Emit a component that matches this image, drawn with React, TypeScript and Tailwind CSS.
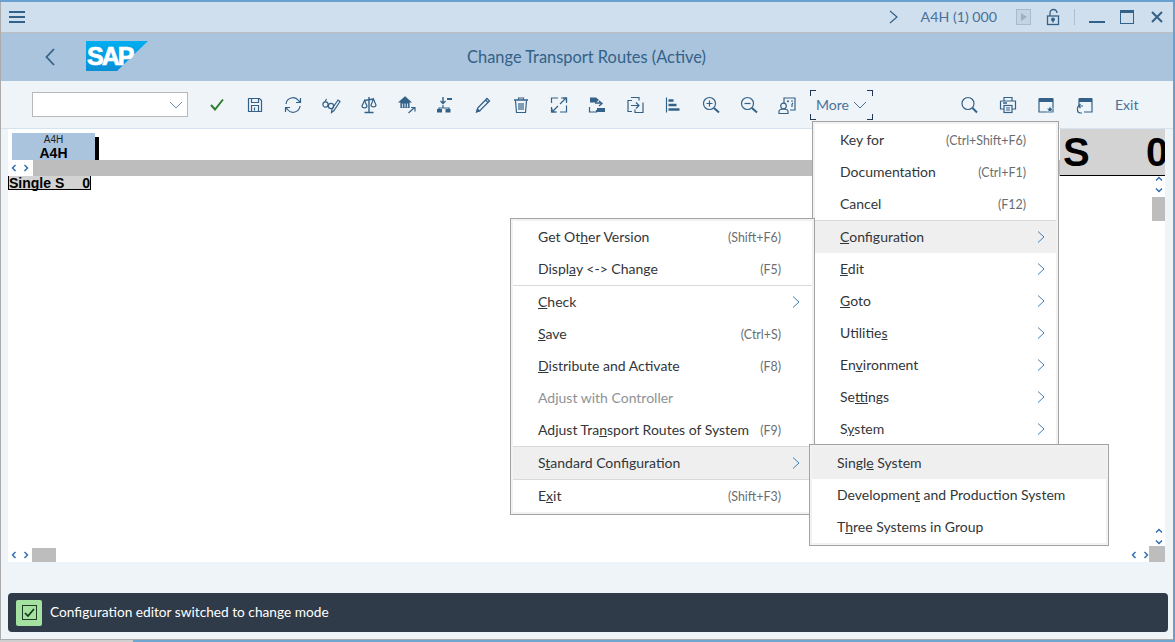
import React from "react";

const C = "#346187";
const S = ({ children, w = 20, h = 20 }: { children: React.ReactNode; w?: number; h?: number }) => (
  <svg width={w} height={h} viewBox={`0 0 ${w} ${h}`} fill="none" stroke={C} strokeWidth="1.2" className="block shrink-0">
    {children}
  </svg>
);

const icons: React.ReactNode[] = [
  <svg width="20" height="20" viewBox="0 0 20 20" fill="none" className="block"><path d="M4 10l4 4.5L16 4.5" stroke="#2b7d2b" strokeWidth="2" /></svg>,
  <S><path d="M3.500 3.500h11l2 2v11h-13z" /><path d="M6.500 3.500v4h7v-4M6.500 16.500v-6h7v6M9.500 12.500v3" /></S>,
  <S><path d="M3 9a7 7 0 0 1 12.500-3.500L17 7M17 11a7 7 0 0 1-12.500 3.500L3 13" /><path d="M17.500 3v4.500h-4.500M2.500 17v-4.500H7" /></S>,
  <S><circle cx="4.500" cy="9.500" r="2.600" /><circle cx="10" cy="11" r="2.600" /><path d="M4 7l1.500-3M7 10l.5.300" /><path d="M10.500 17.500l.5-3.500 6-9 2 1.500-6 9z" strokeWidth="1.200" /></S>,
  <S><path d="M10 2v15M5.500 17.500h9M5.500 5.500l9-1.500" strokeWidth="1.400" /><path d="M5.500 5.500l-2.500 5.500c0 2.500 5 2.500 5 0zM14.500 4l-2.500 6c0 2.500 5 2.500 5 0z" /></S>,
  <S><path d="M8 2l5.500 5h-1.500v5.500H4V7H2.500z" fill={C} /><path d="M5.500 8.500v4M8 8.500v4M10.500 8.500v4" stroke="#c8d9e8" /><path d="M11.500 18l6-5.500M14 12.500h4v4" /></S>,
  <S><path d="M8 2v6M5.500 6L8 8.500 10.500 6" strokeWidth="1.400" /><path d="M12 4h5" strokeWidth="2" /><path d="M8 10v3M4 16v-3h10v3" /><rect x="2" y="14" width="5" height="3.500" fill={C} stroke="none" /><rect x="10.500" y="14" width="5" height="3.500" fill={C} stroke="none" /></S>,
  <S><path d="M4 16.500l.7-3.500L14 3.500l2.500 2.500L7 15.500z" strokeWidth="1.300" /><path d="M12.500 5l2.500 2.500" /><path d="M3.500 17l1-3 2 2z" fill={C} /></S>,
  <S><path d="M3 5h14" strokeWidth="1.500" /><path d="M7.500 4.500V3h5v1.500" /><path d="M4.500 5.500l1 12h9l1-12" /><path d="M8 8v7M10 8v7M12 8v7" /></S>,
  <S><path d="M2.500 8V3H9M11 17h6.500v-6.500M17.500 8V3H12M2.500 12v5H8" /><path d="M11 9l6-6M14 3h3.500v3.500M9 11l-6 6M3 13.500V17h3.500" /></S>,
  <S><path d="M3 2.500h6l3 2.500-3 2.500H3z" fill={C} stroke="none" /><path d="M8 8h6M12 6l3 2.500-3 2.500" strokeWidth="1.400" /><path d="M2.500 12v5h7v-2" /><rect x="10" y="13" width="8" height="4" fill={C} stroke="none" /></S>,
  <S><path d="M7 5.500h-4v11h4M6 2.500h8v3M18 7.500v10H10v-3" /><path d="M6 10.500h8M11 7.500l3 3-3 3" /></S>,
  <S><path d="M3.500 2.500v15" /><path d="M5.500 5.500h5M5.500 10h8M5.500 14.500h11" strokeWidth="2.400" /></S>,
  <S><circle cx="8.500" cy="8.500" r="6" /><path d="M8.500 5.500v6M5.500 8.500h6" /><path d="M13 13l5 4.500" strokeWidth="2" /></S>,
  <S><circle cx="8.500" cy="8.500" r="6" /><path d="M5.500 8.500h6" /><path d="M13 13l5 4.500" strokeWidth="2" /></S>,
  <S><path d="M7 8V3h11v12h-5" /><path d="M10 6h2M14 6h2M15 9v3M10 6l1.500 1M16 9l-1-1" /><circle cx="6.500" cy="11" r="2.800" /><path d="M2 18.500v-2c0-2 2-2.500 4.500-2.500S11 14.500 11 16.500v2z" /></S>,
];

const rightIcons: React.ReactNode[] = [
  <S><circle cx="8" cy="8.500" r="6" /><path d="M12.500 13l4.500 4.500" strokeWidth="2" /></S>,
  <S><path d="M6 6V2.500h8V6" /><path d="M2.500 6h15v8H14M6 14H2.500V6" /><path d="M5 8h4" strokeWidth="1.500" /><rect x="6" y="10.500" width="8" height="7" /><path d="M8 13h4M8 15h4" /></S>,
  <S><path d="M3 4h14v13H3z" /><rect x="3" y="3" width="14" height="4" fill={C} stroke="none" /><path d="M14 11l1 2.300 2.500.2-1.900 1.600.6 2.400-2.200-1.300-2.200 1.300.6-2.400-1.900-1.600 2.500-.2z" fill={C} stroke="#eff4f9" strokeWidth="0.500" /></S>,
  <S><path d="M5 12V4h13v13H10" /><rect x="5" y="3" width="13" height="4" fill={C} stroke="none" /><path d="M9 11H5.500a2 2 0 0 0-2 2v2a3 3 0 0 0 3 3H8" /><path d="M6.500 9l-2 2 2 2" /></S>,
];

const Mini = ({ d, cls = "" }: { d: string; cls?: string }) => (
  <svg width="8" height="8" viewBox="0 0 8 8" fill="none" stroke="#2a6aa8" strokeWidth="1.400" className={"block shrink-0 " + cls}>
    <path d={d} />
  </svg>
);
const L = "M5.500 1L2.500 4l3 3";
const R = "M2.500 1l3 3-3 3";
const U = "M1 5.500L4 2.500l3 3";
const D = "M1 2.500L4 5.500l3-3";

const Chevron = () => (
  <svg width="8" height="14" viewBox="0 0 8 14" fill="none" stroke="#3f7fb8" strokeWidth="1" className="block shrink-0">
    <path d="M1 1.500L7 7l-6 5.500" />
  </svg>
);

type RowP = { label: React.ReactNode; sc?: string; arrow?: boolean; hover?: boolean; off?: boolean; pl: string; scr?: string; arr?: string };
const Row = ({ label, sc, arrow, hover, off, pl, scr, arr }: RowP) => (
  <div className={`h-8 flex items-center ${pl} ${hover ? "bg-[#efefef]" : "bg-white"}`}>
    <span className={`text-[14px] mb-[2px] whitespace-nowrap ${off ? "text-[#8e9296]" : "text-[#32363a]"}`}>{label}</span>
    <span className="flex-1" />
    {sc && <span className={`text-[12.400px] mt-[2px] text-[#6a6d70] whitespace-nowrap ${scr}`}>{sc}</span>}
    {arrow && <span className={arr}><Chevron /></span>}
  </div>
);
const Sep = () => <div className="h-px bg-[#d9d9d9]" />;

const menuCls = "absolute border border-[#a3a3a3] bg-[#f2f2f2] p-[2px]";

export default function App() {
  return (
    <div
      className="relative w-[1175px] h-[642px] overflow-hidden flex flex-col bg-[#eff4f9]"
      style={{ fontFamily: "Lato, Roboto, sans-serif" }}
    >
      <div className="h-[2px] bg-[#6aa0d0] shrink-0" />
      <div className="flex-1 flex flex-col border-l border-[#ababab] border-r-2 border-r-[#6aa0d0] min-h-0">
        {/* title bar */}
        <div className="h-[31px] shrink-0 bg-[#d0dfed] border-b border-[#bdbdbd] flex items-center">
          <div className="ml-2 flex flex-col gap-[3px] w-4">
            <div className="h-[2px] bg-[#346187]" /><div className="h-[2px] bg-[#346187]" /><div className="h-[2px] bg-[#346187]" />
          </div>
          <div className="flex-1" />
          <svg width="9" height="14" viewBox="0 0 9 14" fill="none" stroke={C} strokeWidth="1.200"><path d="M1 1l7 6-7 6" /></svg>
          <span className="ml-[23px] text-[14.200px] text-[#4a7199]">A4H (1) 000</span>
          <div className="ml-[19px] w-[15px] h-[16px] border border-[#a9bccd] bg-[#c4d4e3] flex items-center justify-center">
            <svg width="8" height="8" viewBox="0 0 8 8"><path d="M1 0l6 4-6 4z" fill="#9db1c4" /></svg>
          </div>
          <svg className="ml-[15px]" width="15" height="18" viewBox="0 0 15 18" fill="none" stroke={C} strokeWidth="1.300">
            <path d="M4 8V5a3.500 3.500 0 0 1 7 0" /><rect x="1.500" y="8" width="11" height="8.500" /><circle cx="7" cy="11.500" r="1.300" fill={C} /><path d="M7 12v2.500" />
          </svg>
          <div className="ml-[13px] w-px h-4 bg-[#aebfcf]" />
          <div className="ml-[14px] w-4 h-[2px] bg-[#346187] mt-[10px]" />
          <div className="ml-[15px] w-[14px] h-[14px] border border-[#346187] border-t-[3px]" />
          <svg className="ml-[17px] mr-[10px]" width="12" height="12" viewBox="0 0 12 12" stroke={C} strokeWidth="2"><path d="M1 1l10 10M11 1L1 11" /></svg>
        </div>
        {/* header */}
        <div className="h-12 shrink-0 bg-[#a9c4dc] relative flex items-center justify-center">
          <div className="absolute left-[44px] top-[15px]">
            <svg width="10" height="18" viewBox="0 0 10 18" fill="none" stroke={C} strokeWidth="1.800"><path d="M9 1L1.500 9 9 17" /></svg>
          </div>
          <div className="absolute left-[85px] top-[8px]">
            <svg width="62" height="30" viewBox="0 0 62 30">
              <defs><linearGradient id="g" x1="0" y1="0" x2="0" y2="1"><stop offset="0" stopColor="#00aeef" /><stop offset="1" stopColor="#0a8fd6" /></linearGradient></defs>
              <path d="M0 0H62L31 30H0z" fill="url(#g)" />
              <text x="1" y="24" fontFamily="Liberation Sans" fontWeight="700" fontSize="25" letterSpacing="-2" fill="#fff" stroke="#fff" strokeWidth="0.700">SAP</text>
            </svg>
          </div>
          <span className="text-[16.400px] text-[#346187] ml-[-1px]">Change Transport Routes (Active)</span>
        </div>
        {/* toolbar */}
        <div className="h-12 shrink-0 border-b border-[#d5e2ef] flex items-center pl-[31px]">
          <div className="w-[156px] h-[25px] bg-white border border-[#b8b8b8] flex items-center justify-end pr-[4px]">
            <svg width="14" height="8" viewBox="0 0 14 8" fill="none" stroke="#6d90b0" strokeWidth="1"><path d="M1 1l6 6 6-6" /></svg>
          </div>
          <div className="ml-[10px] flex">
            {icons.map((ic, i) => (
              <div key={i} className="w-[38px] flex justify-center">{ic}</div>
            ))}
          </div>
          <div className="ml-[4px] relative w-[63px] h-[30px] flex items-center pl-[6px] gap-[4px]">
            <span className="text-[14px] text-[#4a7199]">More</span>
            <svg width="14" height="8" viewBox="0 0 14 8" fill="none" stroke="#4a7199" strokeWidth="1"><path d="M1 1l6 6 6-6" /></svg>
            <span className="absolute left-0 top-0 w-[6px] h-[6px] border-l border-t border-[#1f3a55]" />
            <span className="absolute right-0 top-0 w-[6px] h-[6px] border-r border-t border-[#1f3a55]" />
            <span className="absolute left-0 bottom-0 w-[6px] h-[6px] border-l border-b border-[#1f3a55]" />
            <span className="absolute right-0 bottom-0 w-[6px] h-[6px] border-r border-b border-[#1f3a55]" />
          </div>
          <div className="ml-[78px] flex">
            {rightIcons.map((ic, i) => (
              <div key={i} className="w-[38px] flex justify-center">{ic}</div>
            ))}
          </div>
          <span className="ml-[12px] text-[14px] text-[#4a7199]">Exit</span>
        </div>
        {/* content */}
        <div className="h-[433px] shrink-0 flex">
          <div className="w-[7px] shrink-0" />
          <div className="w-[1157px] shrink-0 bg-white flex flex-col">
            <div className="h-[47px] shrink-0 flex">
              <div className="flex-1 flex flex-col">
                <div className="h-[31px] pt-1 pl-1 flex">
                  <div className="w-[83px] h-[27px] bg-[#a9c4dc] flex flex-col items-center" style={{ fontFamily: "'Liberation Sans', sans-serif" }}>
                    <span className="text-[10px] leading-[13px] text-[#222]">A4H</span>
                    <span className="text-[14px] leading-[14px] font-bold text-black">A4H</span>
                  </div>
                  <div className="w-1 h-[23px] mt-1 bg-black" />
                </div>
                <div className="h-4 flex">
                  <div className="w-[25px] flex items-center pl-[2px] gap-1"><Mini d={L} /><Mini d={R} /></div>
                  <div className="flex-1 bg-[#bdbdbd]" />
                </div>
              </div>
              <div className="w-[105px] bg-[#d3d3d3] border-b border-black overflow-hidden font-bold text-[40px] text-black leading-[47px] flex justify-between pl-[3px]" style={{ fontFamily: "'Liberation Sans', sans-serif" }}>
                <span>S</span>
                <span className="w-[19px] overflow-hidden">0</span>
              </div>
            </div>
            <div className="h-[372px] shrink-0 flex">
              <div className="flex-1">
                <div className="w-[83px] h-[14px] bg-[#d3d3d3] border border-t-0 border-black flex justify-between items-center text-[14px] leading-[12px] font-bold text-black" style={{ fontFamily: "'Liberation Sans', sans-serif" }}>
                  <span>Single S</span><span>0</span>
                </div>
              </div>
              <div className="w-[13px] flex flex-col items-center">
                <Mini d={U} cls="-mt-[1px]" />
                <Mini d={D} cls="mt-[3px]" />
                <div className="w-[13px] h-6 bg-[#bdbdbd] mt-[3px]" />
                <div className="flex-1" />
                <Mini d={U} />
                <Mini d={D} cls="mt-[3px] mb-[2px]" />
              </div>
            </div>
            <div className="h-[14px] shrink-0 flex items-center">
              <Mini d={L} cls="ml-[2px]" />
              <Mini d={R} cls="ml-1" />
              <div className="ml-[2px] w-6 h-[14px] bg-[#bdbdbd]" />
              <div className="flex-1" />
              <Mini d={L} />
              <Mini d={R} cls="ml-1" />
              <div className="-ml-[1px] w-4 h-4 -mt-[2px] bg-[#bdbdbd]" />
            </div>
          </div>
        </div>
        {/* footer */}
        <div className="flex-1 pt-[31px] pl-[7px] pr-[5px] border-b border-[#ababab]">
          <div className="h-[39px] rounded-[4px] bg-[#2f3b48] flex items-center pl-2">
            <div className="w-[26px] h-[26px] rounded-[2px] bg-[#a5e2a0] flex items-center justify-center">
              <div className="w-[15px] h-[15px] border border-[#1f3b2a] flex items-center justify-center">
                <svg width="11" height="10" viewBox="0 0 11 10" fill="none" stroke="#123a1c" strokeWidth="1.700"><path d="M1 5l3 3 6-7" /></svg>
              </div>
            </div>
            <span className="ml-2 text-[13.700px] text-white">Configuration editor switched to change mode</span>
          </div>
        </div>
      </div>
      <div className="h-[2px] shrink-0 flex">
        <div className="w-[133px] bg-[#cfcfcf]" />
        <div className="flex-1 bg-[#6ea6d0]" />
      </div>

      {/* More menu */}
      <div className={`${menuCls} left-[812px] top-[121px] w-[247px] z-10`}>
        <Row pl="pl-[25px]" scr="pr-[30px]" label="Key for" sc="(Ctrl+Shift+F6)" />
        <Row pl="pl-[25px]" scr="pr-[30px]" label="Documentation" sc="(Ctrl+F1)" />
        <Row pl="pl-[25px]" scr="pr-[30px]" label="Cancel" sc="(F12)" />
        <Sep />
        <Row pl="pl-[25px]" arr="pr-[11px]" arrow hover label={<><u>C</u>onfiguration</>} />
        <Row pl="pl-[25px]" arr="pr-[11px]" arrow label={<><u>E</u>dit</>} />
        <Row pl="pl-[25px]" arr="pr-[11px]" arrow label={<><u>G</u>oto</>} />
        <Row pl="pl-[25px]" arr="pr-[11px]" arrow label={<>Utilitie<u>s</u></>} />
        <Row pl="pl-[25px]" arr="pr-[11px]" arrow label={<>En<u>v</u>ironment</>} />
        <Row pl="pl-[25px]" arr="pr-[11px]" arrow label={<>Se<u>t</u>tings</>} />
        <Row pl="pl-[25px]" arr="pr-[11px]" arrow label={<>S<u>y</u>stem</>} />
      </div>

      {/* Configuration submenu */}
      <div className={`${menuCls} left-[510px] top-[218px] w-[305px] z-20`}>
        <Row pl="pl-[25px]" scr="pr-[31px]" label={<>Get Ot<u>h</u>er Version</>} sc="(Shift+F6)" />
        <Row pl="pl-[25px]" scr="pr-[31px]" label={<>Displ<u>a</u>y &lt;-&gt; Change</>} sc="(F5)" />
        <Sep />
        <Row pl="pl-[25px]" arr="pr-[12px]" arrow label={<><u>C</u>heck</>} />
        <Row pl="pl-[25px]" scr="pr-[31px]" label={<><u>S</u>ave</>} sc="(Ctrl+S)" />
        <Row pl="pl-[25px]" scr="pr-[31px]" label={<><u>D</u>istribute and Activate</>} sc="(F8)" />
        <Row pl="pl-[25px]" off label="Adjust with Controller" />
        <Row pl="pl-[25px]" scr="pr-[31px]" label={<>Adjust Tra<u>n</u>sport Routes of System</>} sc="(F9)" />
        <Sep />
        <Row pl="pl-[25px]" arr="pr-[12px]" arrow hover label={<>S<u>t</u>andard Configuration</>} />
        <Sep />
        <Row pl="pl-[25px]" scr="pr-[31px]" label={<>E<u>x</u>it</>} sc="(Shift+F3)" />
      </div>

      {/* Standard Configuration submenu */}
      <div className={`${menuCls} left-[809px] top-[444px] w-[300px] z-30`}>
        <Row pl="pl-[25px]" hover label={<>Singl<u>e</u> System</>} />
        <Row pl="pl-[25px]" label={<>Developmen<u>t</u> and Production System</>} />
        <Row pl="pl-[25px]" label={<>T<u>h</u>ree Systems in Group</>} />
      </div>
    </div>
  );
}
